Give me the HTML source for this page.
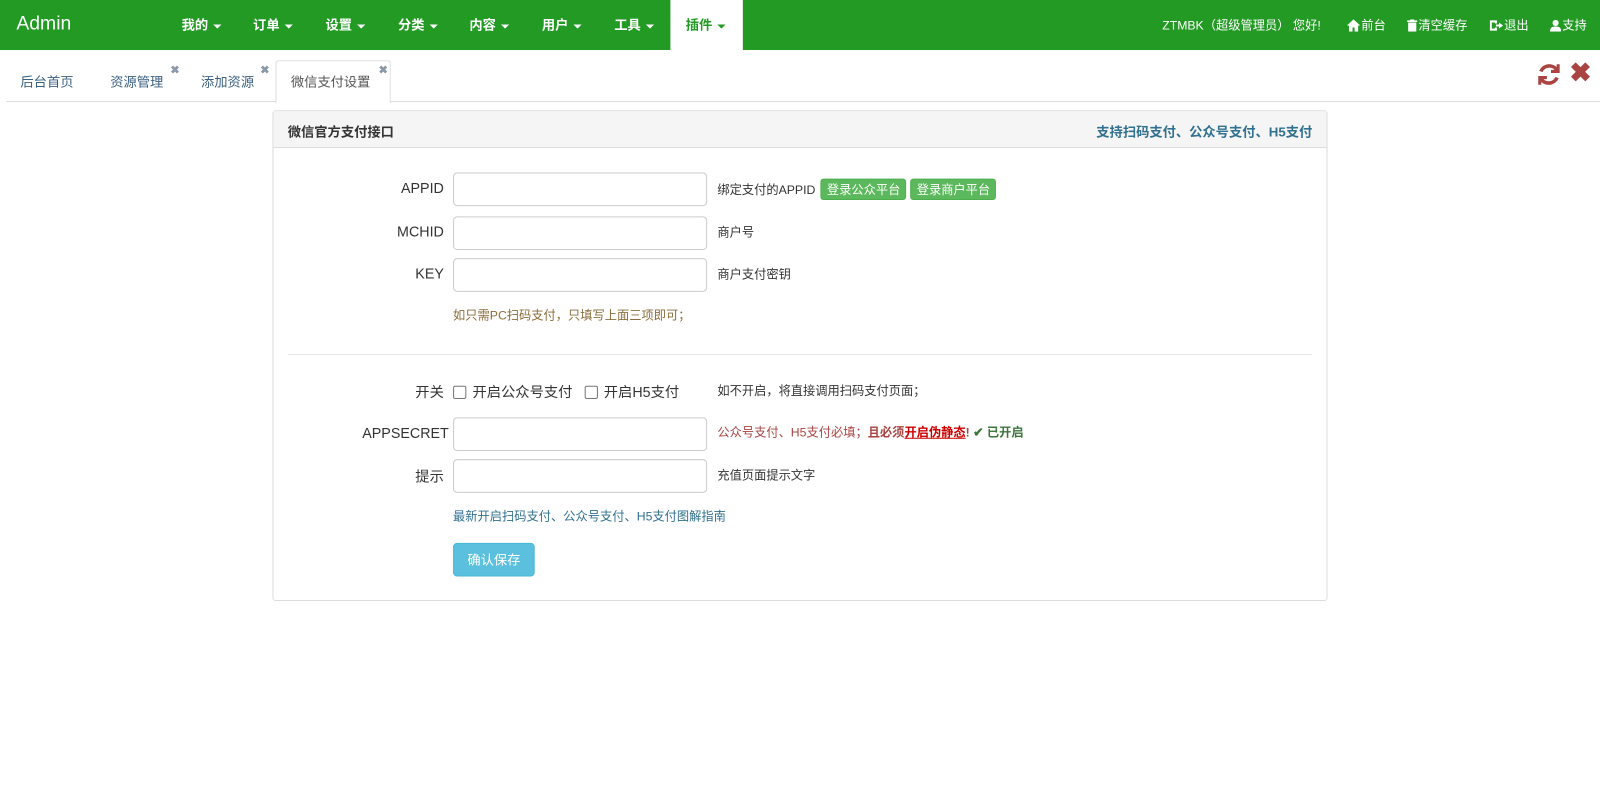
<!DOCTYPE html>
<html><head><meta charset="utf-8">
<style>
*{box-sizing:border-box;margin:0;padding:0}
html,body{width:1600px;height:810px;overflow:hidden;background:#fff}
#w{width:1568px;height:794px;transform:scale(1.0204);transform-origin:0 0;position:relative;font-family:"Liberation Sans","Noto Sans CJK SC",sans-serif;font-size:13px;color:#333}
.nav{position:absolute;left:0;top:0;width:1600px;height:49px;background:#229a23}
.brand{position:absolute;left:16px;top:13px;color:#fff;font-size:19px}
.menu{position:absolute;top:0;height:49px;line-height:50px;color:#fff;font-weight:bold;font-size:13px}
.caret{display:inline-block;width:0;height:0;border-left:4px solid transparent;border-right:4px solid transparent;border-top:4px solid #fff;margin-left:5px;vertical-align:middle}
.active{background:#fff;color:#229a23}
.active .caret{border-top-color:#229a23}
.rt{position:absolute;top:0;line-height:50px;color:#fff;font-size:12px}
.rt svg{vertical-align:-2px;margin-right:1px}
.tabs{position:absolute;left:6px;top:99px;width:1588px;border-top:1px solid #ddd}
.tab{position:absolute;top:70px;font-size:13px;color:#3a5f80}
.x{position:absolute;color:#8a9aa8;font-size:11px;font-weight:bold}
.panel{position:absolute;left:267px;top:108px;width:1034px;height:481px;border:1px solid #ddd;border-radius:3px}
.ph{height:36px;background:#f5f5f5;border-bottom:1px solid #ddd;position:relative}
.lbl{position:absolute;width:80px;text-align:right;left:355px;font-size:14px;color:#333}
.inp{position:absolute;left:444px;width:249px;height:33px;border:1px solid #ccc;border-radius:4px}
.hint{position:absolute;left:703px;font-size:12px;color:#333}
.gbtn{display:inline-block;background:#5cb85c;border:1px solid #4cae4c;color:#fff;font-size:12px;padding:1px 5px;border-radius:3px;margin-left:2px}
.cb{display:inline-block;width:13px;height:13px;border:1px solid #777;border-radius:2px;vertical-align:-2px;margin-right:6px}
</style></head><body><div id="w">
<div class="nav">
<div class="brand">Admin</div>
<div class="menu" style="left:178px">我的<span class="caret"></span></div>
<div class="menu" style="left:248px">订单<span class="caret"></span></div>
<div class="menu" style="left:319px">设置<span class="caret"></span></div>
<div class="menu" style="left:390px">分类<span class="caret"></span></div>
<div class="menu" style="left:460px">内容<span class="caret"></span></div>
<div class="menu" style="left:531px">用户<span class="caret"></span></div>
<div class="menu" style="left:602px">工具<span class="caret"></span></div>
<div class="menu active" style="left:657px;width:71px;padding-left:15px">插件<span class="caret"></span></div>
<div class="rt" style="left:1139px">ZTMBK（超级管理员） 您好!</div>
<div class="rt" style="left:1320px"><svg width="13" height="12" viewBox="0 0 13 12"><path d="M6.5 0L0 6h2v6h3.5V8h2v4H11V6h2z" fill="#fff"/></svg>前台</div>
<div class="rt" style="left:1379px"><svg width="10" height="12" viewBox="0 0 10 12"><path d="M0 1h10v1.5H0zM3 0h4v1H3zM1 3h8v9H1z" fill="#fff"/></svg>清空缓存</div>
<div class="rt" style="left:1460px"><svg width="13" height="12" viewBox="0 0 13 12"><path d="M0 1h7v3H5V3H2v6h3V8h2v3H0z M6 5h3V3l4 3-4 3V7H6z" fill="#fff"/></svg>退出</div>
<div class="rt" style="left:1519px"><svg width="11" height="12" viewBox="0 0 11 12"><circle cx="5.5" cy="3.5" r="3" fill="#fff"/><path d="M0 12c0-4 2-5 5.5-5S11 8 11 12z" fill="#fff"/></svg>支持</div>
</div>
<div style="position:absolute;left:270px;top:59px;width:113px;height:42px;border:1px solid #ddd;border-bottom:none;background:#fff;border-radius:3px 3px 0 0;z-index:2"></div>
<div class="tabs"></div>
<div class="tab" style="left:20px">后台首页</div>
<div class="tab" style="left:108px">资源管理</div><div class="x" style="left:167px;top:62px">✖</div>
<div class="tab" style="left:197px">添加资源</div><div class="x" style="left:255px;top:62px">✖</div>
<div class="tab" style="left:285px;z-index:3;color:#555">微信支付设置</div><div class="x" style="left:371px;top:62px;z-index:3">✖</div>
<svg style="position:absolute;left:1505px;top:60px" width="26" height="26" viewBox="0 0 26 26" fill="none" stroke="#a94442" stroke-width="3.5"><path d="M21 9A9 9 0 0 0 5 10"/><path d="M5 17A9 9 0 0 0 21 16"/><path d="M22 3v7h-7M4 23v-7h7" stroke-width="3"/></svg>
<div style="position:absolute;left:1538px;top:56px;color:#a94442;font-size:26px;font-weight:bold">✖</div>
<div class="panel">
<div class="ph"><span style="position:absolute;left:14px;top:10px;font-weight:bold;font-size:13px">微信官方支付接口</span><span style="position:absolute;right:14px;top:10px;font-weight:bold;color:#31708f;font-size:13px">支持扫码支付、公众号支付、H5支付</span></div>
<div style="position:absolute;left:14px;right:14px;top:238px;border-top:1px solid #e5e5e5"></div>
</div>
<div class="lbl" style="top:176px">APPID</div><div class="inp" style="top:169px"></div>
<div class="hint" style="top:175px">绑定支付的APPID <span class="gbtn">登录公众平台</span><span class="gbtn" style="margin-left:4px">登录商户平台</span></div>
<div class="lbl" style="top:219px">MCHID</div><div class="inp" style="top:212px"></div><div class="hint" style="top:219px">商户号</div>
<div class="lbl" style="top:260px">KEY</div><div class="inp" style="top:253px"></div><div class="hint" style="top:260px">商户支付密钥</div>
<div class="hint" style="left:444px;top:300px;color:#8a6d3b">如只需PC扫码支付，只填写上面三项即可；</div>
<div class="lbl" style="top:374px">开关</div>
<div style="position:absolute;left:444px;top:374px;font-size:14px"><span class="cb"></span>开启公众号支付 &nbsp;&nbsp;<span class="cb"></span>开启H5支付</div>
<div class="hint" style="top:374px">如不开启，将直接调用扫码支付页面；</div>
<div class="lbl" style="top:416px">APPSECRET</div><div class="inp" style="top:409px"></div>
<div class="hint" style="top:415px;color:#a94442">公众号支付、H5支付必填；<b>且必须<u style="color:#c00">开启伪静态</u>!</b> <span style="color:#3c763d;font-weight:bold">✔ 已开启</span></div>
<div class="lbl" style="top:457px">提示</div><div class="inp" style="top:450px"></div><div class="hint" style="top:457px">充值页面提示文字</div>
<div class="hint" style="left:444px;top:497px;color:#31708f">最新开启扫码支付、公众号支付、H5支付图解指南</div>
<div style="position:absolute;left:444px;top:532px;width:80px;height:33px;background:#5bc0de;border:1px solid #46b8da;border-radius:4px;color:#fff;font-size:13px;line-height:31px;text-align:center">确认保存</div>
</div></body></html>
